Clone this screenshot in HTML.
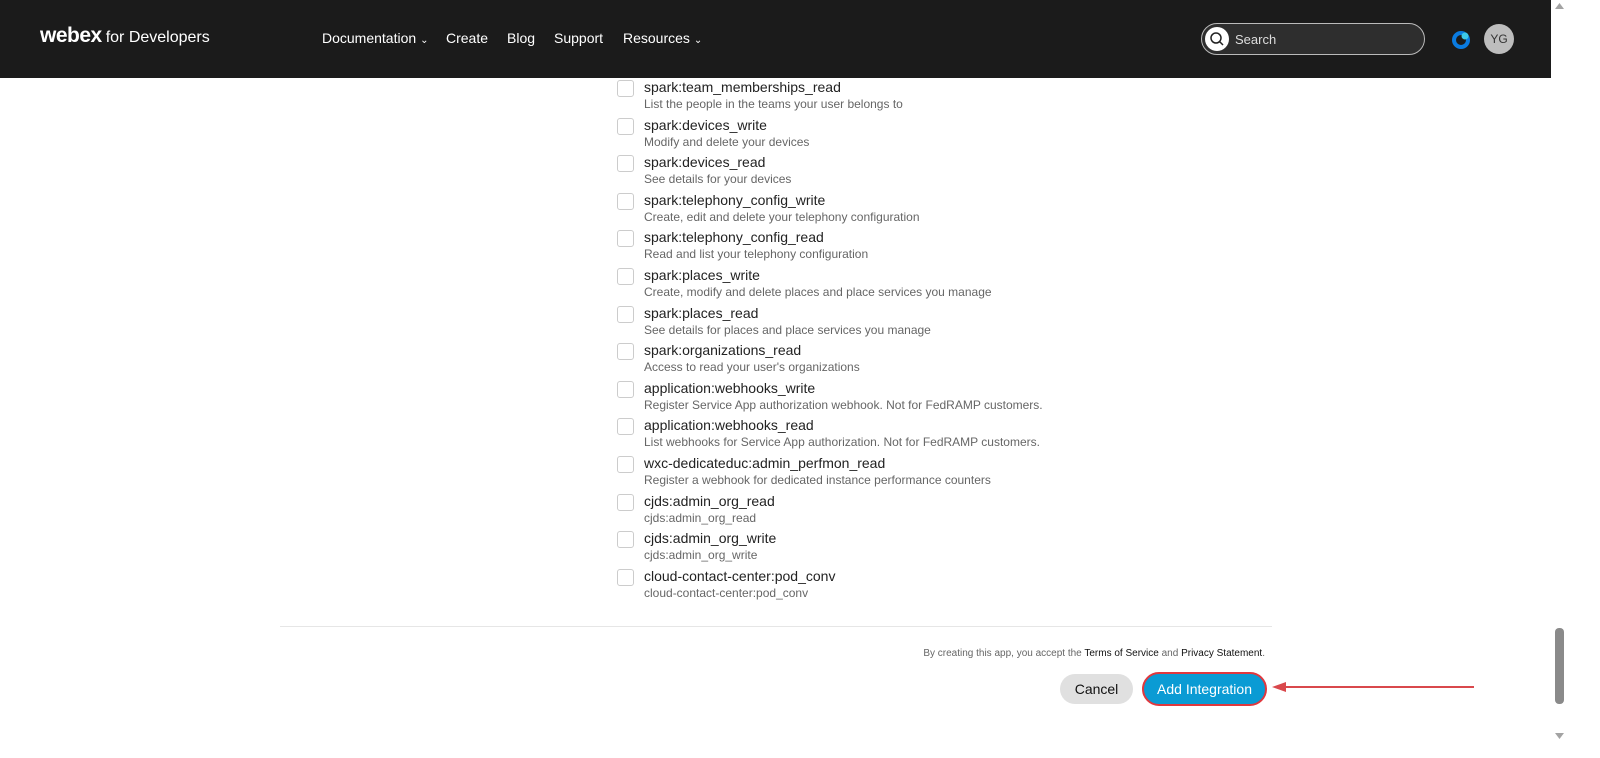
<!DOCTYPE html>
<html><head><meta charset="utf-8"><style>
*{margin:0;padding:0;box-sizing:border-box}
body{width:1600px;height:758px;overflow:hidden;background:#fff;font-family:"Liberation Sans",sans-serif;position:relative}
.hdr{position:absolute;left:0;top:0;width:1551px;height:78px;background:#1b1b1b;color:#fff}
.logo{position:absolute;left:40px;top:24px;font-size:21px;font-weight:bold;letter-spacing:-0.5px}
.logo span{font-weight:normal;font-size:16px;letter-spacing:0;margin-left:4px}
.nav{position:absolute;top:30px;font-size:14px}
.srch{position:absolute;left:1201px;top:23px;width:224px;height:32px;border:1px solid #bbb;border-radius:16px;background:#2e2e2e}
.srch .ic{position:absolute;left:3px;top:3px;width:24px;height:24px;border-radius:12px;background:#fff}
.srch .t{position:absolute;left:33px;top:8px;font-size:13px;color:#ddd}
.av{position:absolute;left:1484px;top:24px;width:30px;height:30px;border-radius:15px;background:#bdbdbd;color:#333;font-size:12px;text-align:center;line-height:30px}
.row{position:absolute;left:617px}
.cb{position:absolute;left:0;top:0;width:17px;height:17px;border:1px solid #ccc;border-radius:3px}
.ti{position:absolute;left:27px;top:-1px;font-size:14px;color:#222;white-space:nowrap}
.de{position:absolute;left:27px;top:17px;font-size:12px;color:#666;white-space:nowrap}
.sb{position:absolute;left:1551px;top:0;width:17px;height:758px;background:#fff}
</style></head><body>
<div class="hdr">
<div class="logo">webex<span>for Developers</span></div>
<div class="nav" style="left:322px">Documentation <span style="font-size:10px">&#8964;</span></div>
<div class="nav" style="left:446px">Create</div>
<div class="nav" style="left:507px">Blog</div>
<div class="nav" style="left:554px">Support</div>
<div class="nav" style="left:623px">Resources <span style="font-size:10px">&#8964;</span></div>
<div class="srch"><div class="ic"><svg width="24" height="24"><circle cx="11" cy="11" r="5" fill="none" stroke="#222" stroke-width="1.5"/><line x1="14.5" y1="14.5" x2="18" y2="18" stroke="#222" stroke-width="1.5"/></svg></div><div class="t">Search</div></div>
<svg style="position:absolute;left:1452px;top:30px" width="20" height="20"><circle cx="9" cy="10" r="7" fill="none" stroke="#0a7be0" stroke-width="4"/><circle cx="13" cy="6" r="3.5" fill="#3cc8e8"/></svg>
<div class="av">YG</div>
</div>

<div class="row" style="top:80px"><div class="cb"></div><div class="ti">spark:team_memberships_read</div><div class="de">List the people in the teams your user belongs to</div></div>
<div class="row" style="top:118px"><div class="cb"></div><div class="ti">spark:devices_write</div><div class="de">Modify and delete your devices</div></div>
<div class="row" style="top:155px"><div class="cb"></div><div class="ti">spark:devices_read</div><div class="de">See details for your devices</div></div>
<div class="row" style="top:193px"><div class="cb"></div><div class="ti">spark:telephony_config_write</div><div class="de">Create, edit and delete your telephony configuration</div></div>
<div class="row" style="top:230px"><div class="cb"></div><div class="ti">spark:telephony_config_read</div><div class="de">Read and list your telephony configuration</div></div>
<div class="row" style="top:268px"><div class="cb"></div><div class="ti">spark:places_write</div><div class="de">Create, modify and delete places and place services you manage</div></div>
<div class="row" style="top:306px"><div class="cb"></div><div class="ti">spark:places_read</div><div class="de">See details for places and place services you manage</div></div>
<div class="row" style="top:343px"><div class="cb"></div><div class="ti">spark:organizations_read</div><div class="de">Access to read your user's organizations</div></div>
<div class="row" style="top:381px"><div class="cb"></div><div class="ti">application:webhooks_write</div><div class="de">Register Service App authorization webhook. Not for FedRAMP customers.</div></div>
<div class="row" style="top:418px"><div class="cb"></div><div class="ti">application:webhooks_read</div><div class="de">List webhooks for Service App authorization. Not for FedRAMP customers.</div></div>
<div class="row" style="top:456px"><div class="cb"></div><div class="ti">wxc-dedicateduc:admin_perfmon_read</div><div class="de">Register a webhook for dedicated instance performance counters</div></div>
<div class="row" style="top:494px"><div class="cb"></div><div class="ti">cjds:admin_org_read</div><div class="de">cjds:admin_org_read</div></div>
<div class="row" style="top:531px"><div class="cb"></div><div class="ti">cjds:admin_org_write</div><div class="de">cjds:admin_org_write</div></div>
<div class="row" style="top:569px"><div class="cb"></div><div class="ti">cloud-contact-center:pod_conv</div><div class="de">cloud-contact-center:pod_conv</div></div>

<div style="position:absolute;left:280px;top:626px;width:992px;height:1px;background:#e6e6e6"></div>
<div style="position:absolute;right:335px;top:648px;font-size:10px;color:#666;white-space:nowrap">By creating this app, you accept the <b style="color:#111;font-weight:normal">Terms of Service</b> and <b style="color:#111;font-weight:normal">Privacy Statement</b>.</div>
<div style="position:absolute;left:1060px;top:674px;width:73px;height:30px;border-radius:15px;background:#e0e0e0;font-size:14px;color:#111;text-align:center;line-height:30px">Cancel</div>
<div style="position:absolute;left:1142px;top:672px;width:125px;height:34px;border-radius:17px;border:2px solid #e0383e;background:#0a9bd4;font-size:14px;color:#fff;text-align:center;line-height:30px">Add Integration</div>
<div style="position:absolute;left:1284px;top:686px;width:190px;height:2px;background:#d9484c"></div>
<svg style="position:absolute;left:1272px;top:680px" width="16" height="14"><polygon points="0,7 14,2 14,12" fill="#d9484c"/></svg>

<div class="sb">
<svg style="position:absolute;left:3px;top:2px" width="11" height="8"><polygon points="5.5,1 10,7 1,7" fill="#a3a3a3"/></svg>
<div style="position:absolute;left:4px;top:628px;width:9px;height:76px;border-radius:4px;background:#8a8a8a"></div>
<svg style="position:absolute;left:3px;top:732px" width="11" height="8"><polygon points="1,1 10,1 5.5,7" fill="#a3a3a3"/></svg>
</div>
</body></html>
